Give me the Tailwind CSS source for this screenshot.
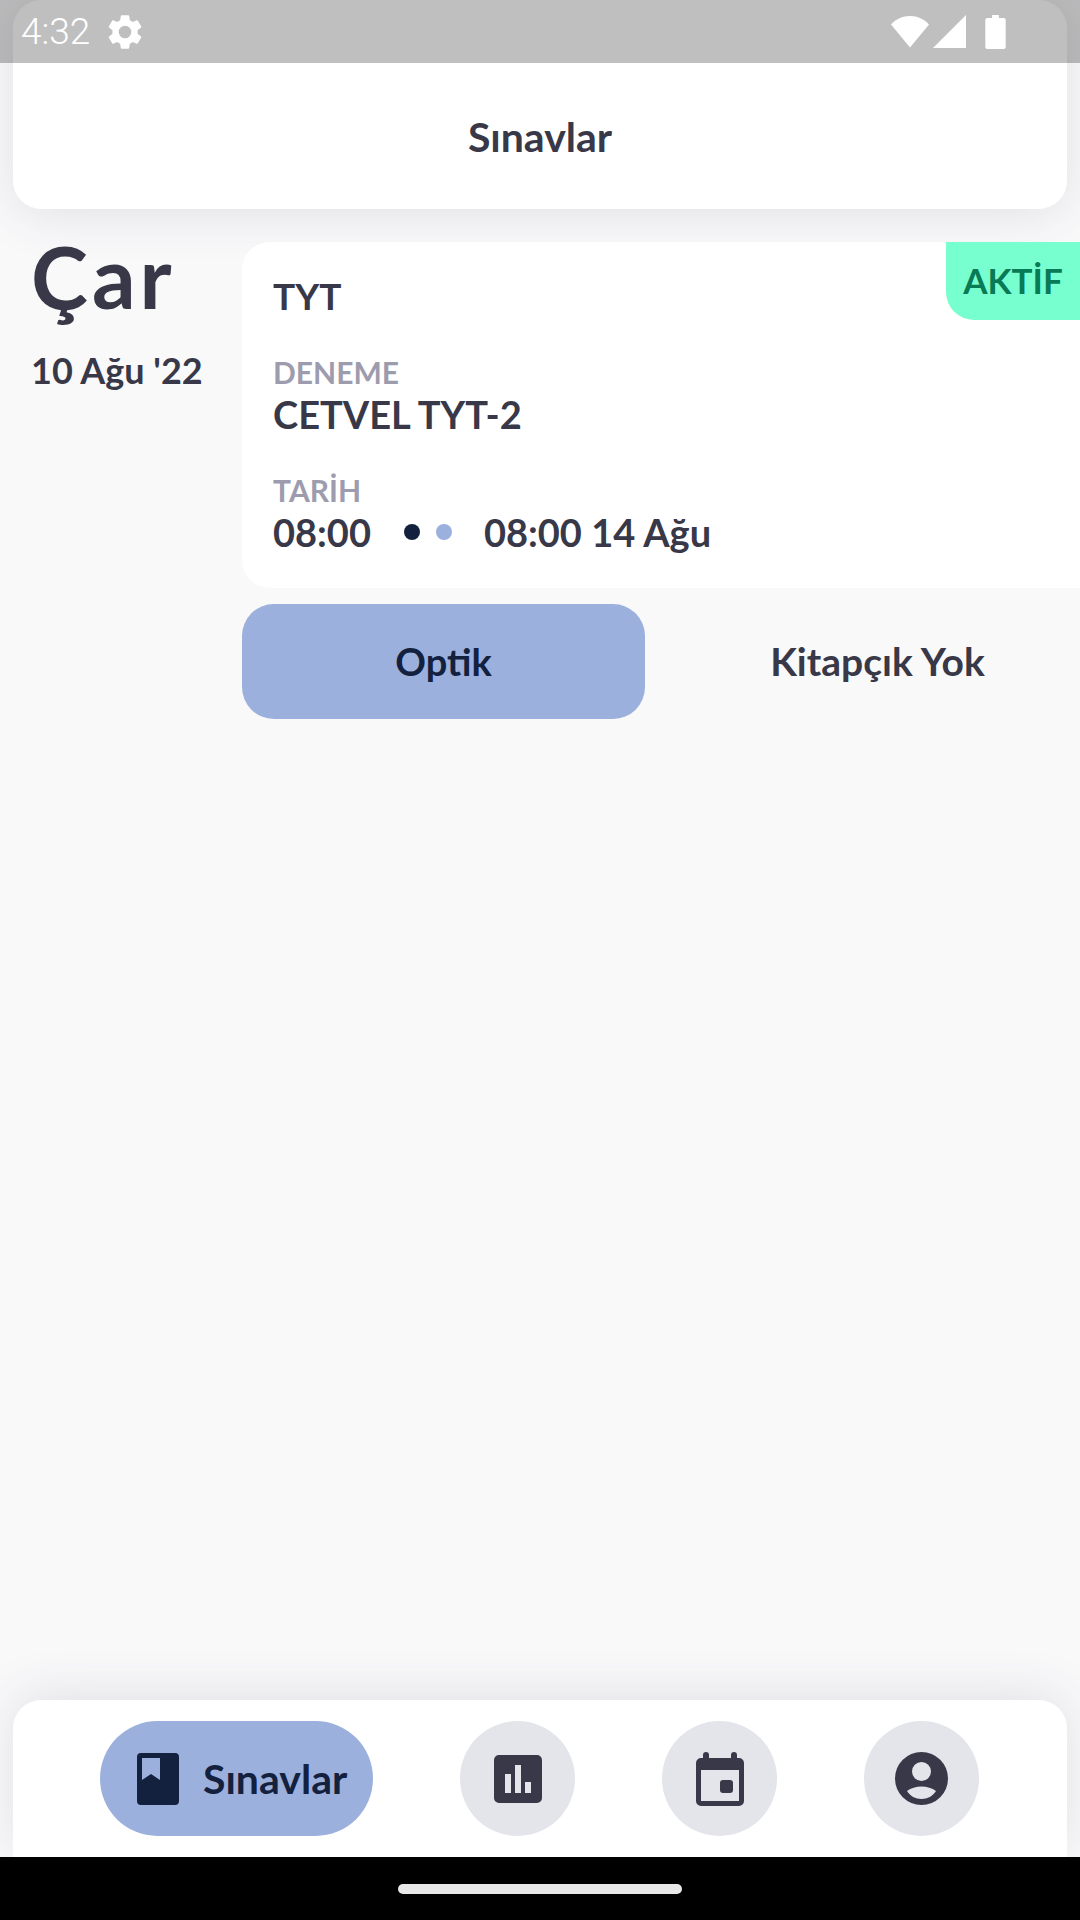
<!DOCTYPE html>
<html lang="tr">
<head>
  <meta charset="UTF-8" />
  <title>Sınavlar</title>
  <script src="https://cdn.jsdelivr.net/npm/@tailwindcss/browser@4"></script>
</head>
<body class="m-0 bg-[#f9f9fa]">
  <div class="relative w-[1080px] h-[1920px] overflow-hidden flex flex-col bg-[#f9f9fa] font-['Lato',sans-serif] text-[#383848]">

    <!-- status bar -->
    <div class="absolute top-0 left-0 w-full h-[63px] z-20 bg-black/25 flex items-center pl-[21px] pr-[74px] text-white">
      <span class="font-['Roboto',sans-serif] text-[37px] font-light leading-none">4:32</span>
      <svg class="ml-[14px]" width="42" height="42" viewBox="0 0 24 24" fill="#fff"><path d="M19.14 12.94c.04-.3.06-.61.06-.94 0-.32-.02-.64-.07-.94l2.03-1.58a.49.49 0 0 0 .12-.61l-1.92-3.32a.49.49 0 0 0-.59-.22l-2.39.96c-.5-.38-1.03-.7-1.62-.94l-.36-2.54a.48.48 0 0 0-.48-.41h-3.84c-.24 0-.43.17-.47.41l-.36 2.54c-.59.24-1.13.57-1.62.94l-2.39-.96a.48.48 0 0 0-.59.22L2.74 8.87c-.12.21-.08.47.12.61l2.03 1.58c-.05.3-.09.63-.09.94s.02.64.07.94l-2.03 1.58a.49.49 0 0 0-.12.61l1.92 3.32c.12.22.37.29.59.22l2.39-.96c.5.38 1.03.7 1.62.94l.36 2.54c.05.24.24.41.48.41h3.84c.24 0 .44-.17.47-.41l.36-2.54c.59-.24 1.13-.56 1.62-.94l2.39.96c.22.08.47 0 .59-.22l1.92-3.32c.12-.22.07-.47-.12-.61l-2.01-1.58zM12 15.6A3.6 3.6 0 1 1 12 8.4a3.6 3.6 0 0 1 0 7.2z"/></svg>
      <div class="ml-auto flex items-center">
        <svg width="40" height="33" viewBox="0 0 40 33" fill="#fff"><path d="M20 32.500L1 9.500C6 4 12.500 1 20 1s14 3 19 8.500z"/></svg>
        <svg class="ml-[3px]" width="33" height="33" viewBox="0 0 33 33" fill="#fff"><path d="M33 0v33H0z"/></svg>
        <svg class="ml-[19px]" width="21" height="34" viewBox="0 0 21 35" fill="#fff"><path d="M7 0h7v3h5a2 2 0 0 1 2 2v28a2 2 0 0 1-2 2H2a2 2 0 0 1-2-2V5a2 2 0 0 1 2-2h5z"/></svg>
      </div>
    </div>

    <!-- header -->
    <header class="mx-[13px] h-[209px] shrink-0 pt-[63px] bg-white rounded-[28px] shadow-[0_6px_50px_rgba(56,56,90,0.12)] flex items-center justify-center">
      <h1 class="text-[41px] font-bold leading-none">Sınavlar</h1>
    </header>

    <!-- exam row -->
    <main class="flex-1 flex pt-[33px]">
      <div class="w-[242px] shrink-0 pl-[31px]">
        <div class="-mt-[5px] text-[86px] font-bold tracking-[4px] leading-[78px]">Çar</div>
        <div class="mt-[35px] text-[36px] font-bold leading-[40px] whitespace-nowrap">10 Ağu '22</div>
      </div>
      <div class="flex-1">
        <section class="relative h-[346px] bg-white rounded-l-[28px] pl-[31px] pt-[36px]">
          <div class="absolute top-0 right-0 w-[134px] h-[78px] bg-[#78ffd0] rounded-bl-[28px] flex items-center justify-center text-[#087a55] text-[35px] font-bold pb-[2px]">AKTİF</div>
          <div class="text-[37px] font-bold leading-[36px]">TYT</div>
          <div class="mt-[42px] text-[30px] font-bold leading-[32px] text-[#9d9cae]">DENEME</div>
          <div class="mt-[6px] text-[38px] font-bold leading-[40px]">CETVEL TYT-2</div>
          <div class="mt-[40px] text-[30px] font-bold leading-[32px] text-[#9d9cae]">TARİH</div>
          <div class="mt-[6px] flex items-center text-[38px] font-bold leading-[40px]">
            <span>08:00</span>
            <span class="ml-[33px] w-[16px] h-[16px] rounded-full bg-[#13213f]"></span>
            <span class="ml-[16px] w-[16px] h-[16px] rounded-full bg-[#9bb0dc]"></span>
            <span class="ml-[32px]">08:00 14 Ağu</span>
          </div>
        </section>
        <div class="mt-[16px] flex items-center">
          <button class="w-[403px] h-[115px] rounded-[32px] bg-[#9bb0dc] text-[#13213f] text-[38px] font-bold">Optik</button>
          <span class="flex-1 pl-[30px] text-center text-[39px] font-bold whitespace-nowrap">Kitapçık Yok</span>
        </div>
      </div>
    </main>

    <!-- bottom nav -->
    <nav class="mx-[13px] h-[157px] shrink-0 bg-white rounded-t-[28px] shadow-[0_-6px_50px_rgba(56,56,90,0.12)] flex items-start pt-[21px] pl-[87px]">
      <div class="w-[273px] h-[115px] rounded-full bg-[#9bb0dc] flex items-center pl-[37px] text-[#13213f]">
        <svg width="42" height="52" viewBox="0 0 42 52" fill="#13213f"><path d="M4 0h34a4 4 0 0 1 4 4v44a4 4 0 0 1-4 4H4a4 4 0 0 1-4-4V4a4 4 0 0 1 4-4zm1 5v22l9-6 9 6V5z" fill-rule="evenodd"/></svg>
        <span class="ml-[24px] text-[41px] font-bold">Sınavlar</span>
      </div>
      <div class="ml-[87px] w-[115px] h-[115px] rounded-full bg-[#e4e4eb] flex items-center justify-center">
        <svg width="48" height="48" viewBox="0 0 48 48" fill="#383848"><path fill-rule="evenodd" d="M5 0h38a5 5 0 0 1 5 5v38a5 5 0 0 1-5 5H5a5 5 0 0 1-5-5V5a5 5 0 0 1 5-5zm6 19v19h6V19zm10-9v28h6V10zm10 17v11h6V27z"/></svg>
      </div>
      <div class="ml-[87px] w-[115px] h-[115px] rounded-full bg-[#e4e4eb] flex items-center justify-center">
        <svg width="48" height="54" viewBox="0 0 48 54" fill="#383848"><path fill-rule="evenodd" d="M10 0a3 3 0 0 1 3 3v3h22V3a3 3 0 0 1 6 0v3h2a5 5 0 0 1 5 5v38a5 5 0 0 1-5 5H5a5 5 0 0 1-5-5V11a5 5 0 0 1 5-5h2V3a3 3 0 0 1 3-3zM5 18v31h38V18z"/><rect x="24" y="28" width="13" height="13" rx="3"/></svg>
      </div>
      <div class="ml-[87px] w-[115px] h-[115px] rounded-full bg-[#e4e4eb] flex items-center justify-center">
        <svg width="53" height="53" viewBox="0 0 53 53" fill="#383848"><path fill-rule="evenodd" d="M26.500 0a26.500 26.500 0 1 1 0 53a26.500 26.500 0 0 1 0-53zm0 10a9.500 9.500 0 1 0 0 19a9.500 9.500 0 0 0 0-19zM12 39c3 5 8.500 8 14.500 8s11.500-3 14.500-8c-4-3-9-4.500-14.500-4.500S16 36 12 39z"/></svg>
      </div>
    </nav>

    <!-- system nav -->
    <div class="h-[63px] shrink-0 bg-black flex items-center justify-center">
      <div class="w-[284px] h-[10px] rounded-full bg-[#e8e8e8]"></div>
    </div>
  </div>
</body>
</html>
